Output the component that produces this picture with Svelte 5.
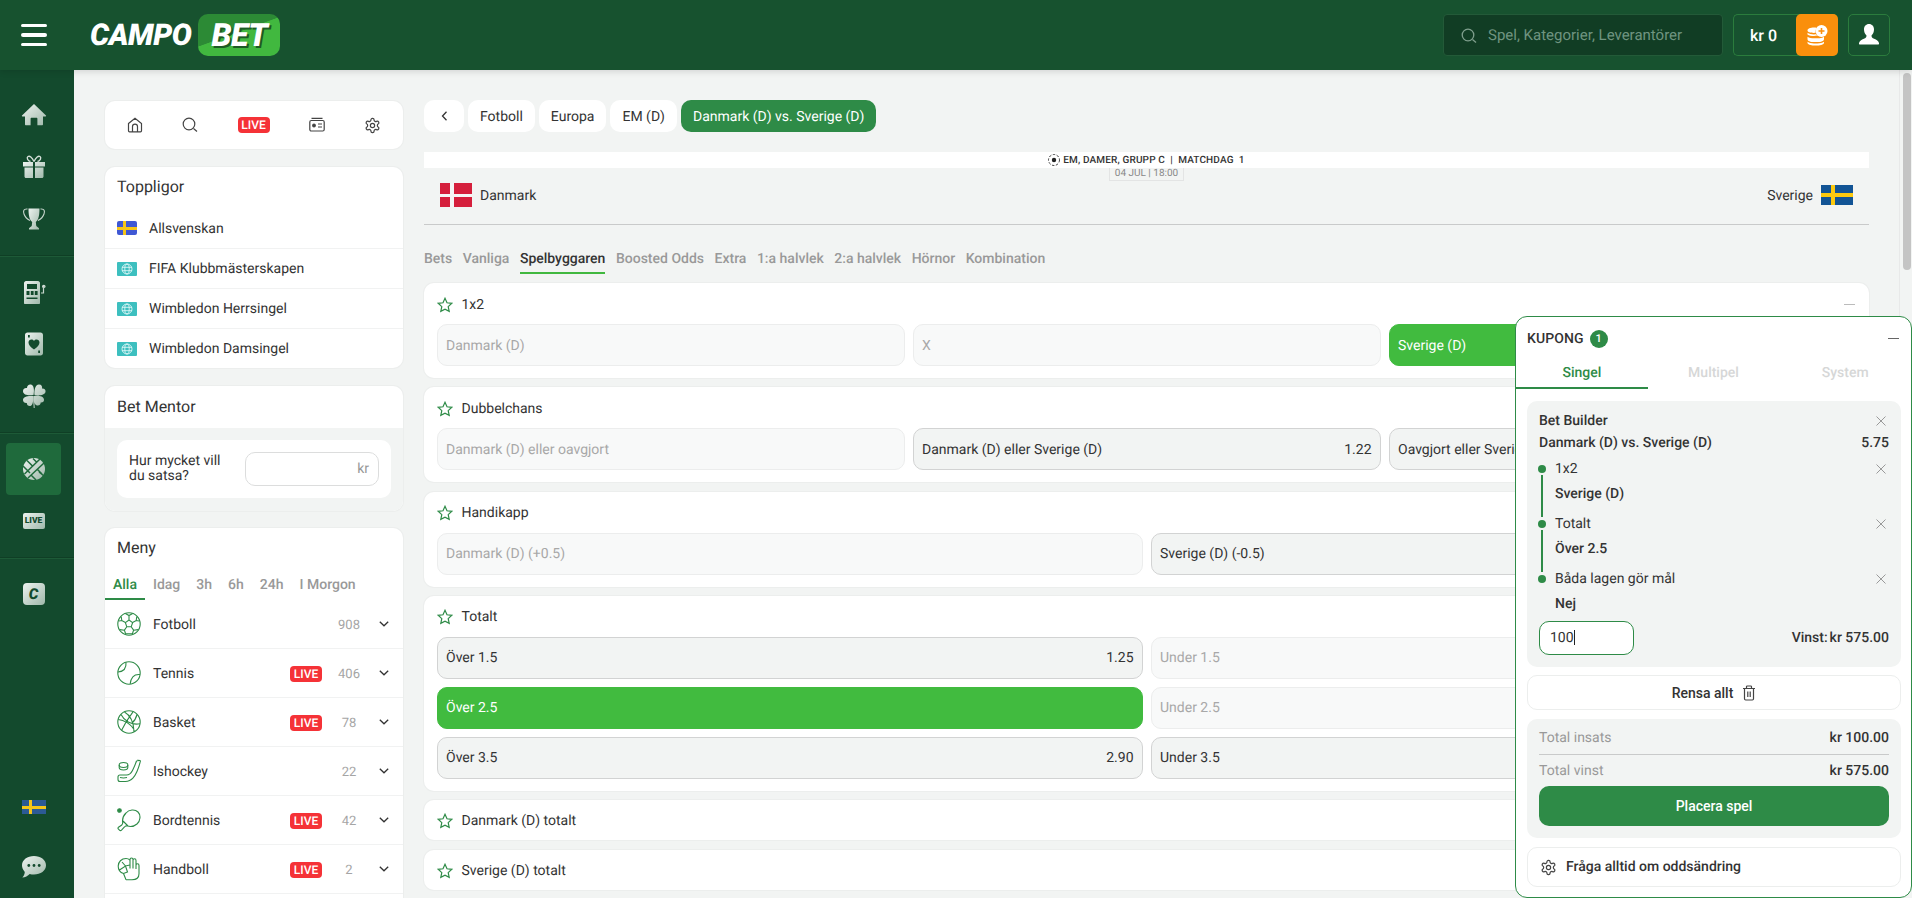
<script lang="ts">
  const sideSections = [['home', 'gift', 'trophy'], ['slots', 'card', 'clover'], ['ball', 'live'], ['casino']];

  const topLeagues = [
    { name: 'Allsvenskan', flag: 'se' },
    { name: 'FIFA Klubbmästerskapen', flag: 'world' },
    { name: 'Wimbledon Herrsingel', flag: 'world' },
    { name: 'Wimbledon Damsingel', flag: 'world' }
  ];

  const menuTabs = ['Alla', 'Idag', '3h', '6h', '24h', 'I Morgon'];

  const sports = [
    { name: 'Fotboll', icon: 'football', live: false, count: 908 },
    { name: 'Tennis', icon: 'tennis', live: true, count: 406 },
    { name: 'Basket', icon: 'basket', live: true, count: 78 },
    { name: 'Ishockey', icon: 'hockey', live: false, count: 22 },
    { name: 'Bordtennis', icon: 'pingpong', live: true, count: 42 },
    { name: 'Handboll', icon: 'handball', live: true, count: 2 }
  ];

  const crumbs = ['Fotboll', 'Europa', 'EM (D)'];
  const marketTabs = ['Bets', 'Vanliga', 'Spelbyggaren', 'Boosted Odds', 'Extra', '1:a halvlek', '2:a halvlek', 'Hörnor', 'Kombination'];

  // state: off = no odds, on = selectable, sel = in the slip
  const markets = [
    { title: '1x2', cols: 3, collapse: true, odds: [
      { label: 'Danmark (D)', state: 'off' }, { label: 'X', state: 'off' }, { label: 'Sverige (D)', state: 'sel' }
    ] },
    { title: 'Dubbelchans', cols: 3, odds: [
      { label: 'Danmark (D) eller oavgjort', state: 'off' },
      { label: 'Danmark (D) eller Sverige (D)', state: 'on', odd: '1.22' },
      { label: 'Oavgjort eller Sverige (D)', state: 'on' }
    ] },
    { title: 'Handikapp', cols: 2, odds: [
      { label: 'Danmark (D) (+0.5)', state: 'off' }, { label: 'Sverige (D) (-0.5)', state: 'on' }
    ] },
    { title: 'Totalt', cols: 2, odds: [
      { label: 'Över 1.5', state: 'on', odd: '1.25' }, { label: 'Under 1.5', state: 'off' },
      { label: 'Över 2.5', state: 'sel' }, { label: 'Under 2.5', state: 'off' },
      { label: 'Över 3.5', state: 'on', odd: '2.90' }, { label: 'Under 3.5', state: 'on' }
    ] },
    { title: 'Danmark (D) totalt', cols: 0, odds: [] },
    { title: 'Sverige (D) totalt', cols: 0, odds: [] }
  ];

  const legs = [
    { market: '1x2', pick: 'Sverige (D)' },
    { market: 'Totalt', pick: 'Över 2.5' },
    { market: 'Båda lagen gör mål', pick: 'Nej' }
  ];
</script>

{#snippet sideIcon(name)}
  {#if name === 'live'}
    <span class="side-badge">LIVE</span>
  {:else if name === 'casino'}
    <span class="side-badge casino">C</span>
  {:else}
    <svg width="26" height="26" viewBox="0 0 26 26" fill="url(#sideGrad)">
      {#if name === 'home'}
        <path d="M13 2 25 13.6c.3.4.1.9-.4.9H22v7.700c0 .6-.4 1-1 1h-4.600v-6.400c0-.6-.4-1-1-1h-4.800c-.6 0-1 .4-1 1v6.400H5c-.6 0-1-.4-1-1v-7.700H1.400c-.5 0-.7-.5-.4-.9z" />
      {:else if name === 'gift'}
        <path d="M2 8h10v4.500H2zM14 8h10v4.500H14zM3.500 13.500H12V24H5c-.8 0-1.500-.7-1.500-1.500zM14 13.500h8.500v9c0 .8-.7 1.500-1.500 1.500h-7z" />
        <path d="M13 7.500C11 3 8.500 1.500 7 2.500 5.500 3.500 6.500 7 9.500 7.500M13 7.500C15 3 17.500 1.500 19 2.500c1.500 1 .5 4.500-2.500 5" fill="none" stroke="#d6e1da" stroke-width="1.400" />
      {:else if name === 'trophy'}
        <path d="M7.500 2.500h11c0 6-.6 11-3.700 13.500l.4 3.500c0 1 1.800 1.500 2.800 2.800v1.200H8v-1.200c1-1.300 2.800-1.800 2.800-2.800l.4-3.500C8.100 13.500 7.500 8.500 7.500 2.500z" />
        <path d="M6.500 3C2.500 2.500 2 5 3 8c.8 2.500 3 5 6 6.500M19.500 3c4-.5 4.500 2 3.500 5-.8 2.500-3 5-6 6.500" fill="none" stroke="#c6d5cc" stroke-width="1.100" />
      {:else if name === 'slots'}
        <path fill-rule="evenodd" d="M5 2h12c1 0 2 1 2 2v20c0 .6-.4 1-1 1H4c-.6 0-1-.4-1-1V4c0-1 1-2 2-2zm1 3v5h10V5zm-.5 7v4h3v-4zm4.300 0v4h2.800v-4zm4 0v4h2.800v-4zM5.500 18.500v1.500h11v-1.500z" />
        <path d="M20 14h2.500V9" fill="none" stroke="#c6d5cc" stroke-width="1.200" /><circle cx="22.800" cy="7.500" r="1.800" />
      {:else if name === 'card'}
        <path fill-rule="evenodd" d="M6.500 1.500h13c1.500 0 2.500 1 2.500 2.500v18c0 1.500-1 2.500-2.500 2.500h-13C5 24.500 4 23.500 4 22V4c0-1.500 1-2.500 2.500-2.500zM13 18.500c3.500-2.500 5.500-4.500 5.500-7 0-3-3.800-4-5.500-1.500-1.700-2.500-5.500-1.500-5.500 1.500 0 2.500 2 4.500 5.500 7zM7 4v2.500h1.800V4zm10.200 15.500V22H19v-2.500z" />
      {:else if name === 'clover'}
        <path d="M12.500 12C8 12.500 2 12.500 2 8c0-2.500 2.300-3.500 4-3C6 2.500 8 1 10 1.500c3 .7 3.500 5.500 2.500 10.500zM13.500 12C13 8 14 1.500 18 1.500c2.500 0 3.500 2 3 4 2.500-.2 4 1.500 3.500 3.500-.7 3-6 4-11 3zM13 13c4.500-.5 9.500 0 10 3.500.3 2.300-1.500 3.300-3.300 3 0 2-1.700 3.500-3.700 3-3-.8-4-5-3-9.500zM12 13c-5-.5-10 .5-10 4 0 2.300 2 3.300 3.800 3 0 2 1.700 3.500 3.700 3 2.500-.8 3-5.500 2.500-10z" />
        <path d="M12.800 13c0 4 0 8 .4 12" fill="none" stroke="#c6d5cc" stroke-width="1" />
      {:else if name === 'ball'}
        <circle cx="13" cy="13" r="11" />
        <g stroke="#1f6a3c" stroke-width="1.500" fill="none">
          <path d="M3.500 18 19 3M7 22 23 7M6 4.500l6 6M12 2.500l4 4M2 10l7 7M10 19l5 5M18 16l5 4M16 13l5 5" />
        </g>
      {/if}
    </svg>
  {/if}
{/snippet}

{#snippet sportIcon(name)}
  <svg class="sport-icon" width="24" height="24" viewBox="0 0 24 24">
    {#if name === 'football'}
      <circle cx="12" cy="12" r="11.200" />
      <path d="m12 8 3.600 2.600-1.400 4.200H9.800l-1.400-4.200zM8.400 1.500 12 3.500l3.600-2M12 3.500V8M8.400 10.600 4.800 8.500 1.800 9M15.600 10.600l3.600-2.100 3 .5M9.800 14.800l-2.400 3.400 1.200 3.500M14.200 14.800l2.400 3.400-1.200 3.500M7.400 18.200l-4.600-.6M16.600 18.200l4.600-.6M4.800 8.500l-.6-3.800M19.200 8.500l.6-3.800M8.600 21.700h6.800" />
    {:else if name === 'tennis'}
      <circle cx="12" cy="12" r="11.200" />
      <path d="M9 1.200C9.500 7 6.500 10.500 1 11M22.900 13.500c-5.500-.5-9 3-9.700 9.400" />
    {:else if name === 'basket'}
      <circle cx="12" cy="12" r="11.200" />
      <path d="M7.500 2c5.500 3 9 9 9.500 19.800M16 1.800C10.500 9 7 15 4.500 20.500M1.300 9.500c5 .5 13 4 16.200 11.300M4 4.500c3 6 10 11 18.900 9.200M20 4.500c-1 4-2.500 6.500-5 8.500" />
    {:else if name === 'hockey'}
      <path d="M21 1.200 23 1.500c.4 0 .5.4.4.700-1.500 6-3.500 12.500-7.500 17-1.800 2-4.500 3.300-7.500 3.300H3c-1.200 0-2-.9-2-2v-2.500c0-1.100.8-2 2-2h6.500c3 0 4.500-1.500 6-4.500 1.500-3 3-6.500 4-9.500.2-.3.8-.3 1.500-.3z" />
      <ellipse cx="6.500" cy="6" rx="4.300" ry="2.500" />
      <path d="M2.200 6v2.500c0 1.400 1.900 2.500 4.300 2.500s4.300-1.100 4.300-2.500V6M3 18.500c2 .5 5 .5 7 0" />
    {:else if name === 'pingpong'}
      <circle cx="2.500" cy="2.500" r="1.800" class="filled" />
      <path d="M9 5c3-3.500 9-4 12-1 3 3 2.500 9-1 12-3 2.500-7 3-10 1.800-1 0-1.800.4-2.500 1.200l-3 3.200c-.5.5-1.500.6-2 0l-1-1c-.6-.6-.5-1.500 0-2L4.800 17c.6-.7 1-1.400.9-2.400C5 11 6.500 7.500 9 5zM6 13l5 5" />
    {:else if name === 'handball'}
      <path d="M9 22.800h6c4 0 7-2 7-6V8.500c0-1-.7-1.700-1.500-1.700S19 7.500 19 8.500V12M19 11.500V3.500c0-1-.7-1.700-1.500-1.700S16 2.500 16 3.500v8M16 3.500v-1c0-1-.7-1.500-1.500-1.500S13 1.500 13 2.500v9" />
      <path d="M13 3c-1-.8-2-1.500-4-1.500C4.500 1.500 1.200 5 1.200 9c0 3.500 2 6.500 5.300 7.500l2.500 6.300M5 5l3.500 4 4.500-1M2.500 13l6-4 2 6-4 1.500" />
    {/if}
  </svg>
{/snippet}

{#snippet star()}
  <svg class="star" width="16" height="16" viewBox="0 0 16 16"><path d="m8 1.300 2 4.500 4.800.5-3.600 3.300 1 4.800L8 12.100l-4.200 2.300 1-4.800L1.200 6.300 6 5.800z" /></svg>
{/snippet}

{#snippet close()}
  <svg class="close" width="10" height="10" viewBox="0 0 10 10"><path d="m.5.5 9 9M9.500.5l-9 9" /></svg>
{/snippet}

{#snippet gear()}
  <svg class="line-icon gear" width="17" height="17" viewBox="0 0 24 24"><path d="M12.220 2h-.44a2 2 0 0 0-2 2v.18a2 2 0 0 1-1 1.730l-.43.25a2 2 0 0 1-2 0l-.15-.08a2 2 0 0 0-2.730.73l-.22.38a2 2 0 0 0 .73 2.730l.15.1a2 2 0 0 1 1 1.720v.51a2 2 0 0 1-1 1.740l-.15.09a2 2 0 0 0-.73 2.730l.22.38a2 2 0 0 0 2.730.73l.15-.08a2 2 0 0 1 2 0l.43.25a2 2 0 0 1 1 1.730V20a2 2 0 0 0 2 2h.44a2 2 0 0 0 2-2v-.18a2 2 0 0 1 1-1.730l.43-.25a2 2 0 0 1 2 0l.15.08a2 2 0 0 0 2.730-.73l.22-.39a2 2 0 0 0-.73-2.730l-.15-.08a2 2 0 0 1-1-1.740v-.5a2 2 0 0 1 1-1.740l.15-.09a2 2 0 0 0 .73-2.730l-.22-.38a2 2 0 0 0-2.730-.73l-.15.08a2 2 0 0 1-2 0l-.43-.25a2 2 0 0 1-1-1.730V4a2 2 0 0 0-2-2z" /><circle cx="12" cy="12" r="3" /></svg>
{/snippet}

{#snippet worldFlag()}
  <span class="flag-world">
    <svg width="12" height="12" viewBox="0 0 12 12"><circle cx="6" cy="6" r="5" /><ellipse cx="6" cy="6" rx="2.200" ry="5" /><path d="M1 4.300h10M1 7.700h10" /></svg>
  </span>
{/snippet}

<svg class="defs" width="0" height="0" aria-hidden="true">
  <defs>
    <linearGradient id="sideGrad" x1="0" y1="0" x2="1" y2="1">
      <stop offset="0" stop-color="#eef3f0" />
      <stop offset="1" stop-color="#9fb8aa" />
    </linearGradient>
  </defs>
</svg>

<div class="page">
  <header class="topbar">
    <button class="burger" aria-label="Meny"><span></span><span></span><span></span></button>
    <div class="logo"><span class="campo">CAMPO</span><span class="bet"><span>BET</span></span></div>
    <div class="top-right">
      <div class="search">
        <svg width="16" height="16" viewBox="0 0 16 16"><circle cx="7" cy="7" r="5.800" /><path d="m11.500 11.500 3.500 3" /></svg>
        <span>Spel, Kategorier, Leverantörer</span>
      </div>
      <div class="balance">
        <span class="amount">kr 0</span>
        <button class="deposit" aria-label="Sätt in">
          <svg width="24" height="24" viewBox="0 0 24 24" fill="#fff">
            <path d="M2.500 7.500c0-1.700 2.800-2.900 6.500-2.900 1 0 2 .1 2.800.3-.8 1-1.300 2.200-1.300 3.600 0 .4 0 .9.200 1.300-.5.100-1.100.1-1.700.1-3.700 0-6.500-.8-6.500-2.400z" />
            <path d="M2.500 9.800c1.500 1.200 4 1.600 6.500 1.600.8 0 1.500 0 2.200-.1l1 1.300c-1 .3-2.100.4-3.200.4-2.500 0-5-.5-6.500-1.600z" />
            <path d="M2.500 13.700c1.500 1.100 4 1.600 6.500 1.600h3.500c2.500 0 5-.5 6.500-1.600v2.500c0 1.700-3 2.900-6.500 2.900h-3.500c-3.500 0-6.500-1.200-6.500-2.900z" />
            <path d="M2.500 18.800c1.500 1.100 4 1.600 6.500 1.600h3.500c2.500 0 5-.5 6.500-1.600v1c0 1.700-3 2.700-6.500 2.700h-3.500c-3.500 0-6.500-1-6.500-2.700z" />
            <circle cx="16.500" cy="8" r="6" />
            <path d="M16.500 5v6M13.500 8h6" stroke="#fa8f0c" stroke-width="1.600" />
          </svg>
        </button>
      </div>
      <button class="profile" aria-label="Profil">
        <svg width="22" height="24" viewBox="0 0 22 24"><path d="M11 1c3 0 5 2.300 5 5.500 0 2.500-1 4.700-2.500 6 0 1.500.5 2.200 2 3 2.500 1 5 2 5.500 4.500.2 1-.3 1.500-1 1.500H2c-.7 0-1.200-.5-1-1.500.5-2.500 3-3.500 5.500-4.500 1.500-.8 2-1.500 2-3C7 11.200 6 9 6 6.500 6 3.300 8 1 11 1z" fill="#fff" /></svg>
      </button>
    </div>
  </header>

  <div class="body">
    <nav class="side">
      {#each sideSections as section}
        <div class="side-group">
          {#each section as item}
            <div class="side-item" class:active={item === 'ball'}>{@render sideIcon(item)}</div>
          {/each}
        </div>
      {/each}
      <div class="side-bottom">
        <span class="side-flag"></span>
        <svg width="24" height="22" viewBox="0 0 24 22" fill="url(#sideGrad)">
          <path d="M12 0c6.600 0 12 3.900 12 9.300s-5.400 9.300-12 9.300c-1.500 0-3-.2-4.300-.6C6 19.800 3 21.500.3 21.500c1.300-1.300 2.300-3.300 2.500-5.600C1 14 0 11.800 0 9.300 0 3.900 5.400 0 12 0z" />
          <g fill="#134a2d"><circle cx="6.800" cy="9.500" r="1.400" /><circle cx="12" cy="9.500" r="1.400" /><circle cx="17.200" cy="9.500" r="1.400" /></g>
        </svg>
      </div>
    </nav>

    <main class="main">
      <aside class="left">
        <div class="card quick">
          <svg class="line-icon" width="16" height="16" viewBox="0 0 16 16"><path d="M1.500 6.500 8 1.200l6.500 5.300v7.300c0 .6-.5 1-1 1h-11c-.6 0-1-.4-1-1zM5.500 14.800V9.500c0-1.300 1-2.300 2.500-2.300s2.500 1 2.500 2.300v5.300" /></svg>
          <svg class="line-icon" width="16" height="16" viewBox="0 0 16 16"><circle cx="7" cy="7" r="5.800" /><path d="m11.500 11.500 3.500 3" /></svg>
          <span class="live">LIVE</span>
          <svg class="line-icon" width="16" height="16" viewBox="0 0 16 16"><rect x=".8" y="3.500" width="14.400" height="10.500" rx="1.500" /><path d="M2.500 1.300h11M9 7h4M9 10h4" /><circle cx="5" cy="8.500" r="1.300" fill="#444" /></svg>
          {@render gear()}
        </div>

        <div class="card leagues">
          <h3>Toppligor</h3>
          {#each topLeagues as league}
            <div class="league">
              {#if league.flag === 'se'}
                <span class="flag-se-small"></span>
              {:else}
                {@render worldFlag()}
              {/if}
              <span class="league-name">{league.name}</span>
            </div>
          {/each}
        </div>

        <div class="card mentor">
          <h3>Bet Mentor</h3>
          <div class="mentor-body">
            <div class="mentor-inner">
              <span class="mentor-label">Hur mycket vill du satsa?</span>
              <div class="mentor-input">kr</div>
            </div>
          </div>
        </div>

        <div class="card menu">
          <h3>Meny</h3>
          <div class="menu-tabs">
            {#each menuTabs as tab, i}
              <span class:current={i === 0}>{tab}</span>
            {/each}
          </div>
          {#each sports as sport}
            <div class="sport">
              {@render sportIcon(sport.icon)}
              <span class="sport-name">{sport.name}</span>
              {#if sport.live}<span class="live">LIVE</span>{/if}
              <span class="count">{sport.count}</span>
              <svg class="chevron" width="10" height="6" viewBox="0 0 10 6"><path d="m.8.8 4.200 4 4.200-4" /></svg>
            </div>
          {/each}
        </div>
      </aside>

      <section class="center">
        <div class="crumbs">
          <span class="crumb back">
            <svg width="7" height="10" viewBox="0 0 7 10"><path d="M5.500.8 1.500 5l4 4.200" /></svg>
          </span>
          {#each crumbs as crumb}
            <span class="crumb">{crumb}</span>
          {/each}
          <span class="crumb current">Danmark (D) vs. Sverige (D)</span>
        </div>

        <div class="league-strip">
          <svg width="12" height="12" viewBox="0 0 12 12"><circle cx="6" cy="6" r="5.500" fill="none" stroke="#333" stroke-width=".9" stroke-dasharray="2.500 1.500" /><circle cx="6" cy="6" r="2.200" fill="#222" /></svg>
          <span>EM, DAMER, GRUPP C &nbsp;|&nbsp; MATCHDAG &nbsp;1</span>
        </div>
        <div class="kickoff"><span>04 JUL | 18:00</span></div>

        <div class="teams">
          <div class="team">
            <span class="flag-dk"></span>
            <span class="team-name">Danmark</span>
          </div>
          <div class="team">
            <span class="team-name">Sverige</span>
            <span class="flag-se"></span>
          </div>
        </div>

        <div class="market-tabs">
          {#each marketTabs as tab, i}
            <span class:current={i === 2}>{tab}</span>
          {/each}
        </div>

        {#each markets as market}
          <div class="market" class:closed={!market.cols}>
            <div class="market-head">
              {@render star()}
              <span>{market.title}</span>
              {#if market.collapse}<span class="collapse"></span>{/if}
            </div>
            {#if market.cols}
              <div class="odds" class:two={market.cols === 2}>
                {#each market.odds as odd}
                  <div class="odd {odd.state}">
                    <span>{odd.label}</span>
                    {#if odd.odd}<span>{odd.odd}</span>{/if}
                  </div>
                {/each}
              </div>
            {/if}
          </div>
        {/each}
      </section>
    </main>
  </div>

  <div class="scroll-track"><div class="scroll-thumb"></div></div>

  <aside class="slip">
    <div class="slip-head">
      <span class="slip-title">KUPONG</span>
      <span class="slip-count">1</span>
      <span class="slip-min"></span>
    </div>
    <div class="slip-tabs">
      <span class="current">Singel</span>
      <span>Multipel</span>
      <span>System</span>
    </div>

    <div class="slip-body">
      <div class="panel builder">
        <div class="line title-line"><span>Bet Builder</span>{@render close()}</div>
        <div class="line match-line"><span>Danmark (D) vs. Sverige (D)</span><span>5.75</span></div>
        <div class="legs">
          {#each legs as leg, i}
            <div class="leg">
              <div class="rail">
                <span class="dot"></span>
                {#if i < legs.length - 1}<span class="rail-line"></span>{/if}
              </div>
              <div class="leg-text">
                <div class="line leg-market"><span>{leg.market}</span>{@render close()}</div>
                <div class="line leg-pick">{leg.pick}</div>
              </div>
            </div>
          {/each}
        </div>
        <div class="stake-row">
          <div class="stake">100<i></i></div>
          <div class="win"><span>Vinst:</span> <span>kr 575.00</span></div>
        </div>
      </div>

      <button class="clear">
        Rensa allt
        <svg class="line-icon" width="14" height="16" viewBox="0 0 14 16"><path d="M1 3.500h12M4.500 3.500V1.800c0-.4.300-.8.800-.8h3.400c.5 0 .8.4.8.8v1.700M2.500 3.500v10.300c0 .7.500 1.200 1.200 1.200h6.600c.7 0 1.200-.5 1.200-1.200V3.500M5.800 6.500v5.500M8.200 6.500v5.500" /></svg>
      </button>

      <div class="panel totals">
        <div class="line total"><span class="muted">Total insats</span><span>kr 100.00</span></div>
        <div class="total-rule"></div>
        <div class="line total"><span class="muted">Total vinst</span><span>kr 575.00</span></div>
        <button class="place">Placera spel</button>
      </div>

      <div class="ask">
        {@render gear()}
        <span>Fråga alltid om oddsändring</span>
      </div>
    </div>
  </aside>
</div>

<style>
  :global(body) {
    margin: 0;
    overflow: hidden;
    font-family: Roboto, "Noto Sans", sans-serif;
    font-size: 14px;
    color: #333;
    text-rendering: geometricPrecision;
  }

  button {
    font: inherit;
    border: 0;
    padding: 0;
    background: none;
  }

  h3 {
    margin: 0;
    font-size: 16px;
    font-weight: 400;
    line-height: 20px;
    color: #333;
  }

  .defs {
    position: absolute;
  }

  .page {
    position: relative;
    width: 1912px;
    height: 898px;
    overflow: hidden;
    background: #f2f4f3;
  }

  /* top bar */
  .topbar {
    position: relative;
    z-index: 2;
    height: 70px;
    display: flex;
    align-items: center;
    padding: 0 22px 0 21px;
    background: #17522f;
    box-shadow: 0 2px 6px rgba(0, 0, 0, 0.12);
    box-sizing: border-box;
  }

  .burger {
    width: 26px;
    display: flex;
    flex-direction: column;
    gap: 6px;
  }

  .burger span {
    height: 3.400px;
    background: #fff;
    border-radius: 2px;
  }

  .logo {
    margin-left: 43px;
    display: flex;
    align-items: center;
    gap: 7px;
    font-style: italic;
    font-weight: 900;
    font-size: 30px;
    letter-spacing: -0.4px;
    color: #fff;
  }

  .bet {
    width: 82px;
    height: 42px;
    margin-top: -1px;
    display: flex;
    align-items: center;
    justify-content: center;
    border-radius: 10px;
    font-size: 32px;
    background: linear-gradient(160deg, #2c8a35 0 45%, #41b83f 46%);
    text-shadow: 2px 2px 0 #1c5a24;
  }

  .top-right {
    margin-left: auto;
    display: flex;
    gap: 10px;
  }

  .search {
    width: 280px;
    height: 42px;
    box-sizing: border-box;
    display: flex;
    align-items: center;
    gap: 11px;
    padding-left: 17px;
    background: #113d24;
    border: 1px solid #235a38;
    border-radius: 4px;
    color: #6f9480;
    font-size: 15px;
  }

  .search svg {
    fill: none;
    stroke: #7f9f8d;
    stroke-width: 1.300;
    margin-top: 2px;
  }

  .balance {
    width: 105px;
    height: 42px;
    box-sizing: border-box;
    display: flex;
    align-items: center;
    justify-content: space-between;
    border: 1px solid #2b7c3d;
    border-right: 0;
    border-radius: 5px;
    color: #fff;
    font-size: 16px;
    font-weight: 500;
  }

  .amount {
    padding-left: 16px;
  }

  .deposit {
    width: 42px;
    height: 42px;
    margin: -1px 0;
    display: grid;
    place-items: center;
    background: #fa8f0c;
    border-radius: 5px;
  }

  .profile {
    width: 42px;
    height: 42px;
    box-sizing: border-box;
    display: grid;
    place-items: center;
    border: 1px solid #2b7c3d;
    border-radius: 5px;
  }

  .body {
    display: flex;
    height: 828px;
  }

  /* side rail */
  .side {
    width: 74px;
    flex: none;
    display: flex;
    flex-direction: column;
    padding-top: 9px;
    box-sizing: border-box;
    background: #134a2d;
  }

  .side-group {
    padding: 10px 0;
    border-bottom: 1px solid #0f3f25;
    box-shadow: 0 1px 0 #1d5a37;
  }

  .side-group:nth-child(4) {
    border: 0;
    box-shadow: none;
  }

  .side-item {
    height: 52px;
    margin: 0 13px 0 6px;
    display: grid;
    place-items: center;
    border-radius: 4px;
  }

  .side-item.active {
    background: #1f6a3c;
  }

  .side-badge {
    width: 22px;
    height: 16px;
    display: grid;
    place-items: center;
    border-radius: 2px;
    background: linear-gradient(135deg, #eef3f0, #9fb8aa);
    color: #134a2d;
    font-size: 8.500px;
    font-weight: 900;
  }

  .side-badge.casino {
    height: 22px;
    border-radius: 4px;
    font-size: 15px;
    font-style: italic;
  }

  .side-bottom {
    margin-top: auto;
    padding-bottom: 20px;
    padding-right: 6px;
    display: flex;
    flex-direction: column;
    align-items: center;
    gap: 42px;
  }

  .side-flag {
    width: 24px;
    height: 14px;
    background:
      linear-gradient(#f5c518, #f5c518) 0 50% / 100% 3px no-repeat,
      linear-gradient(#f5c518, #f5c518) 7px 0 / 3px 100% no-repeat,
      #2c5a94;
  }

  /* main */
  .main {
    flex: 1;
    min-width: 0;
    display: flex;
    gap: 21px;
    padding: 30px 43px 0 31px;
    overflow: hidden;
  }

  .left {
    width: 298px;
    flex: none;
    padding-top: 1px;
  }

  .card {
    background: #fff;
    border-radius: 10px;
    box-shadow: 0 0 0 1px #eceeed;
  }

  .quick {
    height: 48px;
    margin-bottom: 18px;
    padding: 0 22px;
    display: flex;
    align-items: center;
    justify-content: space-between;
  }

  .line-icon {
    fill: none;
    stroke: #444;
    stroke-width: 1.200;
    flex: none;
  }

  .gear {
    stroke-width: 1.700;
  }

  .live {
    width: 32px;
    height: 16px;
    flex: none;
    display: grid;
    place-items: center;
    background: #f53237;
    border-radius: 4px;
    color: #fff;
    font-size: 12px;
    font-weight: 500;
  }

  .leagues {
    height: 201px;
    margin-bottom: 18px;
  }

  .leagues h3 {
    padding: 10px 12px 11px;
  }

  .league {
    height: 40px;
    box-sizing: border-box;
    display: flex;
    align-items: center;
    gap: 12px;
    padding: 0 12px;
    border-top: 1px solid #f1f2f2;
  }

  .league:first-of-type {
    border-top: 0;
  }

  .league-name {
    margin-top: 1px;
  }

  .flag-se-small {
    width: 20px;
    height: 14px;
    border-radius: 2px;
    background:
      linear-gradient(#f5c518, #f5c518) 0 50% / 100% 3px no-repeat,
      linear-gradient(#f5c518, #f5c518) 6px 0 / 3px 100% no-repeat,
      #3f58d4;
  }

  .flag-world {
    width: 20px;
    height: 14px;
    display: grid;
    place-items: center;
    background: #3dbfbf;
    border-radius: 1px;
  }

  .flag-world svg {
    fill: none;
    stroke: #e8fafa;
    stroke-width: 0.800;
  }

  .mentor {
    height: 125px;
    margin-bottom: 17px;
    overflow: hidden;
  }

  .mentor h3 {
    padding: 11px 12px;
  }

  .mentor-body {
    height: 83px;
    box-sizing: border-box;
    padding: 12px 12px 0;
    background: #f2f4f3;
  }

  .mentor-inner {
    height: 58px;
    box-sizing: border-box;
    display: flex;
    align-items: center;
    justify-content: space-between;
    padding: 0 12px;
    background: #fff;
    border-radius: 10px;
  }

  .mentor-label {
    width: 110px;
    line-height: 15px;
  }

  .mentor-input {
    width: 134px;
    height: 34px;
    box-sizing: border-box;
    padding-right: 9px;
    line-height: 32px;
    text-align: right;
    border: 1px solid #dcdddd;
    border-radius: 10px;
    color: #999;
  }

  .menu {
    padding-bottom: 40px;
  }

  .menu h3 {
    padding: 10px 12px;
  }

  .menu-tabs {
    display: flex;
    padding-top: 7px;
    color: #999;
    font-weight: 500;
    line-height: 20px;
  }

  .menu-tabs span {
    padding: 0 8px;
    height: 25px;
    box-sizing: border-box;
  }

  .menu-tabs .current {
    color: #2e8b47;
    border-bottom: 2px solid #2e8b47;
  }

  .sport {
    height: 49px;
    box-sizing: border-box;
    display: flex;
    align-items: center;
    padding: 0 14px 0 12px;
    border-bottom: 1px solid #f1f2f2;
  }

  .sport-icon {
    fill: none;
    stroke: #2e8b47;
    stroke-width: 1.100;
    flex: none;
  }

  .sport-icon .filled {
    fill: #2e8b47;
  }

  .sport-name {
    margin-left: 12px;
    margin-top: 2px;
    flex: 1;
  }

  .sport .live {
    margin-top: 2px;
  }

  .count {
    width: 40px;
    margin: 2px 0 0 7px;
    text-align: center;
    font-size: 13px;
    color: #a5a5a5;
  }

  .chevron {
    margin-left: 10px;
    fill: none;
    stroke: #333;
    stroke-width: 1.300;
  }

  /* center */
  .center {
    flex: 1;
    min-width: 0;
  }

  .crumbs {
    display: flex;
    gap: 4px;
  }

  .crumb {
    height: 32px;
    box-sizing: border-box;
    display: flex;
    align-items: center;
    padding: 2px 12px 0;
    background: #fff;
    border-radius: 10px;
  }

  .crumb.back {
    width: 40px;
    padding: 0;
    justify-content: center;
  }

  .crumb.back svg {
    fill: none;
    stroke: #333;
    stroke-width: 1.300;
  }

  .crumb.current {
    background: #2e8b47;
    color: #fff;
  }

  .league-strip {
    height: 16px;
    margin-top: 20px;
    display: flex;
    align-items: center;
    justify-content: center;
    gap: 3px;
    background: #fff;
    font-size: 10px;
    font-weight: 500;
    letter-spacing: 0.15px;
  }

  .kickoff {
    display: flex;
    justify-content: center;
  }

  .kickoff span {
    height: 13px;
    padding: 0 5px;
    line-height: 12px;
    border: 1px solid #e3e4e4;
    border-top: 0;
    font-size: 10px;
    color: #888;
    box-sizing: border-box;
  }

  .teams {
    height: 44px;
    box-sizing: border-box;
    display: flex;
    justify-content: space-between;
    align-items: flex-start;
    padding: 2px 16px 0;
    border-bottom: 1px solid #c9caca;
  }

  .team {
    height: 24px;
    display: flex;
    align-items: center;
    gap: 8px;
  }

  .team-name {
    margin-top: 2px;
  }

  .flag-dk {
    width: 32px;
    height: 24px;
    background:
      linear-gradient(#f5f5f5, #f5f5f5) 0 50% / 100% 3px no-repeat,
      linear-gradient(#f5f5f5, #f5f5f5) 10px 0 / 4px 100% no-repeat,
      #d51f3c;
  }

  .flag-se {
    width: 32px;
    height: 20px;
    background:
      linear-gradient(#fcc90f, #fcc90f) 0 50% / 100% 4px no-repeat,
      linear-gradient(#fcc90f, #fcc90f) 10px 0 / 4px 100% no-repeat,
      #125495;
  }

  .market-tabs {
    height: 49px;
    box-sizing: border-box;
    display: flex;
    gap: 10.500px;
    padding-top: 24px;
    margin-bottom: 9px;
    color: #999;
    font-weight: 500;
    line-height: 20px;
  }

  .market-tabs span {
    height: 25px;
    box-sizing: border-box;
  }

  .market-tabs .current {
    color: #333;
    border-bottom: 2px solid #41b83f;
  }

  .market {
    margin-bottom: 9.300px;
    padding: 0 12.500px;
    background: #fff;
    border-radius: 10px;
    box-shadow: 0 0 0 1px #eceeed;
  }

  .market.closed {
    margin-bottom: 10px;
  }

  .market-head {
    height: 41px;
    box-sizing: border-box;
    padding-top: 2px;
    display: flex;
    align-items: center;
    gap: 9px;
  }

  .market.closed .market-head {
    height: 40px;
  }

  .star {
    fill: none;
    stroke: #2e8b47;
    stroke-width: 1.200;
    flex: none;
  }

  .collapse {
    width: 11px;
    height: 1.500px;
    margin-left: auto;
    background: #bbb;
    margin-right: 2px;
  }

  .odds {
    display: grid;
    grid-template-columns: repeat(3, 1fr);
    gap: 8px;
    padding-bottom: 12px;
  }

  .odds.two {
    grid-template-columns: repeat(2, 1fr);
  }

  .odd {
    height: 42px;
    box-sizing: border-box;
    display: flex;
    align-items: center;
    justify-content: space-between;
    padding: 1px 8px 0 8.500px;
    border: 1px solid #d2d3d3;
    border-radius: 10px;
    background: #f2f4f3;
  }

  .odd.off {
    background: #f8f9f9;
    border-color: #eceded;
    color: #a8a8a8;
  }

  .odd.sel {
    background: #41bb3f;
    border-color: #41bb3f;
    color: #fff;
  }

  /* scrollbar */
  .scroll-track {
    position: absolute;
    top: 70px;
    right: 0;
    bottom: 0;
    width: 13px;
    border-left: 1px solid #e8e9e9;
    box-sizing: border-box;
  }

  .scroll-thumb {
    width: 8px;
    height: 197px;
    margin: 3px 0 0 3px;
    background: #c4c4c4;
    border-radius: 4px;
  }

  /* slip */
  .slip {
    position: absolute;
    z-index: 3;
    top: 316px;
    right: 0;
    bottom: 0;
    width: 397px;
    box-sizing: border-box;
    background: #fff;
    border: 1px solid #2e8b47;
    border-radius: 12px;
  }

  .slip-head {
    height: 43px;
    display: flex;
    align-items: center;
    padding: 0 12px 0 11px;
    gap: 6px;
  }

  .slip-title {
    font-weight: 500;
    letter-spacing: 0.1px;
  }

  .slip-count {
    width: 18px;
    height: 18px;
    display: grid;
    place-items: center;
    border-radius: 50%;
    background: #2e8b47;
    color: #fff;
    font-size: 11px;
    font-weight: 500;
  }

  .slip-min {
    width: 11px;
    height: 1.500px;
    margin-left: auto;
    background: #666;
  }

  .slip-tabs {
    display: grid;
    grid-template-columns: repeat(3, 1fr);
    height: 29px;
    text-align: center;
    font-weight: 500;
    line-height: 27px;
    color: #d6d7d7;
  }

  .slip-tabs span {
    box-sizing: border-box;
    height: 29px;
  }

  .slip-tabs .current {
    color: #2e8b47;
    border-bottom: 2px solid #2e8b47;
  }

  .slip-body {
    padding: 12px 10px 0 11px;
  }

  .panel {
    background: #f2f4f3;
    border-radius: 10px;
    padding: 0 12px 12px;
  }

  .line {
    height: 20px;
    display: flex;
    align-items: center;
    justify-content: space-between;
    line-height: 20px;
    box-sizing: border-box;
  }

  .builder .line {
    padding-top: 2px;
  }

  .close {
    fill: none;
    stroke: #999;
    stroke-width: 1;
    margin-right: 3px;
    flex: none;
  }

  .builder {
    padding-top: 9px;
  }

  .title-line,
  .match-line {
    font-weight: 500;
  }

  .match-line {
    margin-top: 2px;
  }

  .legs {
    margin-top: 6px;
  }

  .leg {
    display: flex;
    height: 55px;
    gap: 9px;
  }

  .leg:last-child {
    height: 45px;
  }

  .leg-pick {
    margin-top: 5px;
    font-weight: 500;
  }

  .leg-text {
    flex: 1;
    min-width: 0;
  }

  .rail {
    width: 8px;
    flex: none;
    display: flex;
    flex-direction: column;
    align-items: center;
    padding-top: 7px;
    gap: 2px;
    margin-left: -1px;
  }

  .dot {
    width: 8px;
    height: 8px;
    flex: none;
    border-radius: 50%;
    background: #2e8b47;
  }

  .rail-line {
    width: 2px;
    height: 42px;
    flex: none;
    background: #2e8b47;
  }

  .stake-row {
    margin-top: 8px;
    display: flex;
    align-items: center;
    justify-content: space-between;
  }

  .stake {
    width: 95px;
    height: 34px;
    box-sizing: border-box;
    padding-left: 10px;
    line-height: 32px;
    background: #fff;
    border: 1px solid #2e8b47;
    border-radius: 10px;
  }

  .stake i {
    display: inline-block;
    width: 1px;
    height: 15px;
    vertical-align: -3px;
    background: #222;
  }

  .win {
    font-weight: 500;
    display: flex;
    gap: 2px;
  }

  .clear {
    width: 100%;
    height: 35px;
    margin: 8px 0 9px;
    display: flex;
    align-items: center;
    justify-content: center;
    gap: 9px;
    background: #fff;
    border: 1px solid #eceeed;
    border-radius: 10px;
    font-weight: 500;
    color: #333;
  }

  .totals {
    padding-top: 9px;
  }

  .total {
    font-weight: 500;
  }

  .muted {
    color: #999;
    font-weight: 400;
  }

  .total-rule {
    height: 1px;
    margin: 6px 0;
    background: #c9caca;
  }

  .place {
    width: 100%;
    height: 40px;
    margin-top: 5px;
    background: #2e8b47;
    border-radius: 10px;
    color: #fff;
    font-weight: 500;
  }

  .ask {
    height: 40px;
    margin-top: 9px;
    box-sizing: border-box;
    display: flex;
    align-items: center;
    gap: 9px;
    padding-left: 12px;
    border: 1px solid #eceeed;
    border-radius: 10px;
    font-weight: 500;
  }
</style>
